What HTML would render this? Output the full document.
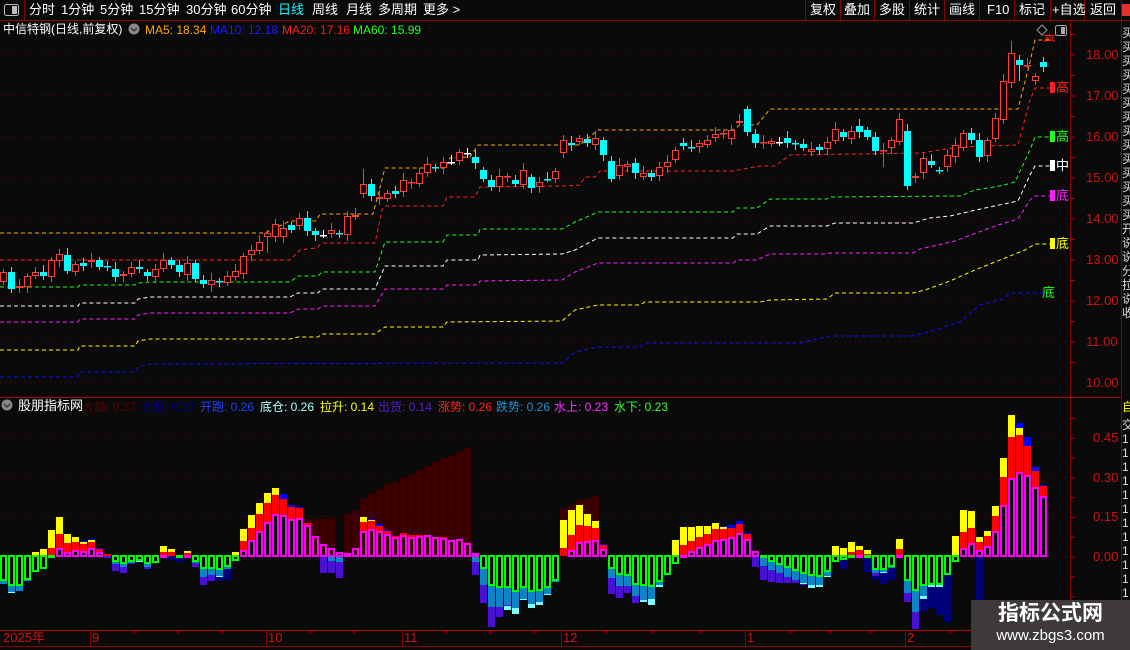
<!DOCTYPE html>
<html><head><meta charset="utf-8">
<style>
html,body{margin:0;padding:0;background:#0a0a0a;}
body{width:1130px;height:650px;overflow:hidden;position:relative;font-family:"Liberation Sans","Noto Sans CJK SC",sans-serif;color:#fff;}
.t{position:absolute;white-space:nowrap;font-size:13px;line-height:15px;}
.m{position:absolute;white-space:nowrap;font-size:12px;line-height:14px;}
.ax{position:absolute;left:1086px;font-size:13px;color:#d01010;font-family:"Liberation Sans",sans-serif;line-height:14px;}
.lb{position:absolute;font-size:13px;line-height:14px;}
.lb i{display:inline-block;width:5px;height:11px;vertical-align:-1px;margin-right:1px;}
.side{position:absolute;left:1122px;font-size:12px;line-height:14px;color:#ddd;overflow:hidden;width:8px;}
</style></head><body>
<svg id="s" width="1130" height="650" style="position:absolute;left:0;top:0" xmlns="http://www.w3.org/2000/svg">
<rect width="1130" height="650" fill="#0a0a0a"/>
<g id="grid" stroke="#6a0000" stroke-dasharray="1 4" stroke-width="1">
<line x1="0" y1="54.5" x2="1068" y2="54.5"/><line x1="0" y1="95.5" x2="1068" y2="95.5"/>
<line x1="0" y1="136.5" x2="1068" y2="136.5"/><line x1="0" y1="177.5" x2="1068" y2="177.5"/>
<line x1="0" y1="218.5" x2="1068" y2="218.5"/><line x1="0" y1="259.5" x2="1068" y2="259.5"/>
<line x1="0" y1="300.5" x2="1068" y2="300.5"/><line x1="0" y1="341.5" x2="1068" y2="341.5"/>
<line x1="0" y1="382.5" x2="1068" y2="382.5"/>
<line x1="0" y1="437.5" x2="1068" y2="437.5"/><line x1="0" y1="477.5" x2="1068" y2="477.5"/>
<line x1="0" y1="516.5" x2="1068" y2="516.5"/><line x1="0" y1="556.5" x2="1068" y2="556.5"/>
</g>
<g id="lines" fill="none" stroke-width="1" stroke-dasharray="4 3"></g>
<g id="g"></g>
<g stroke="#8a0000" stroke-width="1">
<line x1="0" y1="20.5" x2="1130" y2="20.5"/>
<line x1="24.5" y1="0" x2="24.5" y2="20"/>
<line x1="805.5" y1="0" x2="805.5" y2="20"/><line x1="840.5" y1="0" x2="840.5" y2="20"/>
<line x1="874.5" y1="0" x2="874.5" y2="20"/><line x1="909.5" y1="0" x2="909.5" y2="20"/>
<line x1="944.5" y1="0" x2="944.5" y2="20"/><line x1="979.5" y1="0" x2="979.5" y2="20"/>
<line x1="1014.5" y1="0" x2="1014.5" y2="20"/><line x1="1050.5" y1="0" x2="1050.5" y2="20"/>
<line x1="1084.5" y1="0" x2="1084.5" y2="20"/><line x1="1121.5" y1="0" x2="1121.5" y2="650"/>
<line x1="1070.5" y1="20" x2="1070.5" y2="630"/>
<line x1="0" y1="397.5" x2="1121" y2="397.5" stroke="#b00000"/>
<line x1="0" y1="630.5" x2="1121" y2="630.5" stroke="#b00000"/>
<line x1="0" y1="646.5" x2="1121" y2="646.5"/>
<line x1="90.5" y1="630" x2="90.5" y2="646"/><line x1="266.5" y1="630" x2="266.5" y2="646"/>
<line x1="402.5" y1="630" x2="402.5" y2="646"/><line x1="561.5" y1="630" x2="561.5" y2="646"/>
<line x1="745.5" y1="630" x2="745.5" y2="646"/><line x1="905.5" y1="630" x2="905.5" y2="646"/>
</g>
<g id="ticks" stroke="#b00000"></g>
<rect x="4.5" y="4.5" width="14" height="11" rx="2" fill="none" stroke="#bbb"/>
<rect x="12" y="6" width="5" height="8" fill="#bbb"/>
<rect x="1055.5" y="25.5" width="11" height="10" rx="2" fill="none" stroke="#aaa"/>
<rect x="1061" y="27" width="4" height="7" fill="#aaa"/>
<path d="M1042 25 L1047 30 L1042 35 L1037 30 Z" fill="none" stroke="#999"/>
<circle cx="134" cy="29" r="5.5" fill="#888"/><path d="M131 28 L134 31 L137 28" stroke="#333" fill="none" stroke-width="1.3"/>
<circle cx="7" cy="405" r="5.5" fill="#888"/><path d="M4 404 L7 407 L10 404" stroke="#333" fill="none" stroke-width="1.3"/>
<rect x="1122" y="4" width="8" height="12" fill="#e03030"/>
<rect x="971" y="600" width="159" height="50" fill="#3d3a39"/>
</svg>

<div class="t" style="left:29px;top:2px">分时</div>
<div class="t" style="left:61px;top:2px">1分钟</div>
<div class="t" style="left:100px;top:2px">5分钟</div>
<div class="t" style="left:139px;top:2px">15分钟</div>
<div class="t" style="left:186px;top:2px">30分钟</div>
<div class="t" style="left:231px;top:2px">60分钟</div>
<div class="t" style="left:278px;top:2px;color:#00ffff">日线</div>
<div class="t" style="left:312px;top:2px">周线</div>
<div class="t" style="left:346px;top:2px">月线</div>
<div class="t" style="left:378px;top:2px">多周期</div>
<div class="t" style="left:423px;top:2px">更多 &gt;</div>
<div class="t" style="left:810px;top:2px">复权</div>
<div class="t" style="left:844px;top:2px">叠加</div>
<div class="t" style="left:879px;top:2px">多股</div>
<div class="t" style="left:914px;top:2px">统计</div>
<div class="t" style="left:949px;top:2px">画线</div>
<div class="t" style="left:987px;top:2px">F10</div>
<div class="t" style="left:1019px;top:2px">标记</div>
<div class="t" style="left:1052px;top:2px">+自选</div>
<div class="t" style="left:1090px;top:2px">返回</div>

<div class="m" style="left:3px;top:22px;font-size:12px">中信特钢(日线,前复权)</div>
<div class="m" style="left:145px;top:23px;color:#ffa500">MA5: 18.34</div>
<div class="m" style="left:210px;top:23px;color:#1a1aff">MA10: 12.18</div>
<div class="m" style="left:282px;top:23px;color:#ff1a1a">MA20: 17.16</div>
<div class="m" style="left:353px;top:23px;color:#20ff20">MA60: 15.99</div>

<div class="m" style="left:18px;top:399px;font-size:13px">股朋指标网</div>
<div class="m" style="left:82px;top:400px;color:#5a0000">大趋: 0.37</div>
<div class="m" style="left:141px;top:400px;color:#000090">大驱: 0.37</div>
<div class="m" style="left:200px;top:400px;color:#2040ff">开跑: 0.26</div>
<div class="m" style="left:260px;top:400px;color:#b0ffff">底仓: 0.26</div>
<div class="m" style="left:320px;top:400px;color:#ffff00">拉升: 0.14</div>
<div class="m" style="left:378px;top:400px;color:#5020d0">出货: 0.14</div>
<div class="m" style="left:438px;top:400px;color:#ff2020">涨势: 0.26</div>
<div class="m" style="left:496px;top:400px;color:#2090d0">跌势: 0.26</div>
<div class="m" style="left:554px;top:400px;color:#ff30ff">水上: 0.23</div>
<div class="m" style="left:614px;top:400px;color:#30ff30">水下: 0.23</div>

<div class="ax" style="top:48px">18.00</div>
<div class="ax" style="top:89px">17.00</div>
<div class="ax" style="top:130px">16.00</div>
<div class="ax" style="top:171px">15.00</div>
<div class="ax" style="top:212px">14.00</div>
<div class="ax" style="top:253px">13.00</div>
<div class="ax" style="top:294px">12.00</div>
<div class="ax" style="top:335px">11.00</div>
<div class="ax" style="top:376px">10.00</div>
<div class="ax" style="top:431px;left:1093px">0.45</div>
<div class="ax" style="top:471px;left:1093px">0.30</div>
<div class="ax" style="top:510px;left:1093px">0.15</div>
<div class="ax" style="top:550px;left:1093px">0.00</div>

<div class="lb" style="left:1043px;top:34px;color:#ff2020;height:8px;overflow:hidden">高</div>
<div class="lb" style="left:1050px;top:81px;color:#ff2020"><i style="background:#ff2020"></i>高</div>
<div class="lb" style="left:1050px;top:130px;color:#20ff20"><i style="background:#20ff20"></i>高</div>
<div class="lb" style="left:1050px;top:159px;color:#fff"><i style="background:#fff"></i>中</div>
<div class="lb" style="left:1050px;top:189px;color:#ff20ff"><i style="background:#ff20ff"></i>底</div>
<div class="lb" style="left:1050px;top:237px;color:#ffff00"><i style="background:#ffff00"></i>底</div>
<div class="lb" style="left:1042px;top:286px;color:#20ff20">底</div>

<div class="side" style="top:26px">买<br>买<br>买<br>买<br>买<br>买<br>买<br>买<br>买<br>买<br>买<br>买<br>买<br>买<br>开<br>说<br>说<br>分<br>拉<br>说<br>收</div>
<div class="side" style="top:400px;color:#ffff00">自</div>
<div class="side" style="top:418px">交<br>1<br>1<br>1<br>1<br>1<br>1<br>1<br>1<br>1<br>1<br>1<br>1</div>

<div class="m" style="left:3px;top:631px;color:#d01010;font-size:13px">2025年</div>
<div class="m" style="left:92px;top:631px;color:#d01010;font-size:13px">9</div>
<div class="m" style="left:268px;top:631px;color:#d01010;font-size:13px">10</div>
<div class="m" style="left:404px;top:631px;color:#d01010;font-size:13px">11</div>
<div class="m" style="left:563px;top:631px;color:#d01010;font-size:13px">12</div>
<div class="m" style="left:747px;top:631px;color:#d01010;font-size:13px">1</div>
<div class="m" style="left:907px;top:631px;color:#d01010;font-size:13px">2</div>

<div style="position:absolute;left:971px;top:602px;width:159px;text-align:center;font-size:21px;font-weight:bold;color:#fff;line-height:24px;font-family:'Liberation Sans','Noto Sans CJK SC',sans-serif">指标公式网</div>
<div style="position:absolute;left:971px;top:627px;width:159px;text-align:center;font-size:15px;color:#fff;line-height:18px">www.zbgs3.com</div>

<script>
(function(){
var C=["272,282,r","272,289,c","286,288,r","276,287,r","272,276,r","272,276,c","260,277,r","254,261,r","255,271,c","264,272,r",
"263,266,c","260,262,r","260,267,c","266,267,c","269,277,c","274,276,r","267,274,r","267,269,c","272,276,c","269,277,r",
"260,269,r","260,265,c","265,272,c","263,275,r","263,279,c","280,284,c","280,285,r","281,281,c","276,283,r","271,277,r",
"256,274,r","250,255,r","242,251,r","233,237,r","224,237,r","228,237,r","225,230,c","218,226,r","218,231,c","231,235,c",
"235,235,w","230,234,r","233,233,c","216,235,r","215,217,r","184,194,r","184,196,c","197,199,r","193,199,r","191,194,c",
"180,192,r","182,183,r","173,184,r","164,173,r","167,167,c","162,168,r","162,162,w","152,161,r","153,153,w","157,163,c",
"170,179,c","180,187,c","176,187,r","176,176,r","180,184,c","170,185,r","177,188,c","182,187,r","179,179,c","171,179,r",
"140,153,r","143,145,c","138,142,r","139,143,c","138,145,r","140,155,c","161,179,c","165,176,r","164,167,r","163,173,c",
"173,177,r","173,177,c","167,176,r","162,167,r","150,160,r","143,146,c","147,147,c","143,147,r","140,145,r","134,138,r",
"133,134,r","130,139,r","121,123,r","109,132,c","134,143,c","142,143,r","141,144,r","142,142,w","138,143,c","143,144,c",
"144,148,c","149,152,r","147,150,c","142,149,r","129,141,r","132,137,c","131,139,r","126,132,c","130,137,c","137,151,c",
"150,150,r","140,148,r","119,142,r","131,186,c","176,178,r","158,173,r","161,165,c","170,170,c","155,167,r","145,157,r",
"133,148,r","133,140,c","140,157,c","140,156,r","118,139,r","81,120,r","53,83,r","60,65,c","65,65,r","76,81,r","62,67,c"];
var h="";
for(var k=0;k<C.length;k++){
 var p=C[k].split(","),t=+p[0],b=+p[1],ty=p[2],x=8*k,cx=x+3.5;
 var wt=t-3-(k%3)*2,wb=b+3+(k%4);
 if(k==45)wt=169;if(k==112)wt=113;if(k==110)wb=167;if(k==126)wt=41;if(k==127)wb=81;if(k==26)wb=292;if(k==33)wb=253;
 var col=ty=="r"?"#ff3c3c":(ty=="c"?"#00ffff":"#ffffff");
 h+='<line x1="'+cx+'" y1="'+wt+'" x2="'+cx+'" y2="'+wb+'" stroke="'+col+'"/>';
 if(b-t<2){h+='<rect x="'+x+'" y="'+t+'" width="7" height="1.5" fill="'+col+'"/>';}
 else if(ty=="r"){h+='<rect x="'+(x+0.5)+'" y="'+(t+0.5)+'" width="6" height="'+(b-t-1)+'" fill="#0a0a0a" stroke="'+col+'"/>';}
 else{h+='<rect x="'+x+'" y="'+t+'" width="7" height="'+(b-t)+'" fill="'+col+'"/>';}
}
var I=["G25c3","G30c6L1","G30c5","G24c1","G16Y4","G13Y7","G2R8Y18","M8R14Y17","M4R9Y9","M6R8Y5","M5R7Y2B1","M8R6Y2B1","M4R3B1","R2P2","G6c2P7","G8c3P6","G6c1P1","G5L1","G8c3P2","G7",
"M1R3Y6","R4Y3N4","G2N4","M1R2Y2","G6c1P4","G13c8P8","G13c6P6","G14c6L1N4","G11c2N11","G5Y4","M6R9Y12","M16R12Y13","M25R17Y11","M34R19Y10","M42R19Y7","M41R16B5","M37R12B2","M38R10B1","M31R2D37","M20D37",
"M12P17D37","M8c5P12D38","M4c6P16","M3D42","M8D45","M25R9Y5D57","M27R8Y1B1D63","M25R5B2D67","M22R3B1D72","M19R1D74","M21R2D78","M19R2D82","M20R1D86","M21D90","M19D94","M18R1D98","M16D100","M17D104","M13D108","M3c6P13",
"G13c16P18","G30c21P20","G32c19P10","G32c17P1L4","G36c16L6","G32c11L1","G36c12L4","G35c11L3","G32c6L1","G25c1","R8Y28D48","M6R15Y25D51","M14R17Y20D56","M15R15Y12D57","M16R12Y7D60","M7R4B1","G13c9P16","G19c11P12","G20c10P7","G29c11P7",
"G30c14L2","G31c12L6","G26c3L2","G19","G8Y16","M1R10Y18","M5R10Y14","M9R10Y11","M12R10Y8","M16R11Y6","M17R10Y2B1","M19R9B3","M23R9B3","M17R5B1","M5P11","G2c8P14","G6c8P12","G9c8P10","G12c9P6","G15c9P3",
"G18c9L1P1","G20c9L3","G21c8L2","G16c4L1","G6Y10","G4Y8N9","G1R4Y10","M1R5Y4","G1R2Y4N15","G14c3P3N4","G14c2L1N11","G11c1N12","M1R6Y10","G25c12P9","G35c21P17","G30c10L3N12","G29L2N21","G29L2N28","G19N47","G6Y20",
"M8R16Y22","M13R15Y17","M6R8Y5N60","M10R10Y5","M25R15Y10","M51R28Y19","M78R41Y22","M84R37Y7B5","M81R29B9","M69R16B4","M60R10B1"];
var Z=556,col={R:"#ff0000",Y:"#ffff00",B:"#0000ff",c:"#0a84c6",P:"#4a10d6",L:"#80ffff",N:"#000078"};
for(var k=0;k<I.length;k++){
 var x=8*k,re=/([A-Za-z])(\d+)/g,m,d={},ord=[];
 while((m=re.exec(I[k]))){d[m[1]]=+m[2];ord.push(m[1]);}
 if(d.D){h+='<rect x="'+x+'" y="'+(Z-d.D)+'" width="7" height="'+d.D+'" fill="#3a0000"/>';}
 var up=Z,dn=Z;
 if(d.M){up=Z-d.M;}
 ["R","Y","B"].forEach(function(c){if(d[c]){h+='<rect x="'+x+'" y="'+(up-d[c])+'" width="7" height="'+d[c]+'" fill="'+col[c]+'"/>';up-=d[c];}});
 if(d.G){dn=Z+d.G;}
 ord.forEach(function(c){if("cPLN".indexOf(c)>=0){h+='<rect x="'+x+'" y="'+dn+'" width="7" height="'+d[c]+'" fill="'+col[c]+'"/>';dn+=d[c];}});
 if(d.M){h+='<rect x="'+(x+1)+'" y="'+(Z-d.M+1)+'" width="5" height="'+Math.max(d.M-1,1)+'" fill="none" stroke="#ff00ff" stroke-width="2"/>';}
 if(d.G){h+='<rect x="'+(x+1)+'" y="'+Z+'" width="5" height="'+Math.max(d.G-1,1)+'" fill="none" stroke="#00ff00" stroke-width="2"/>';}
}
document.getElementById("g").innerHTML=h;
var L=[
["#ffa500","0,233 265,233 290,221 316,221 320,214 373,214 385,168 445,168 450,158 470,157 478,145 580,145 598,130 733,130 740,125 757,125 770,109 1018,109 1030,62 1035,40 1050,40"],
["#ff2020","0,260 290,260 300,250 316,248 322,243 375,243 382,210 385,206 443,206 447,197 475,197 480,187 563,186 580,185 585,177 595,177 600,171 733,171 760,166 775,166 790,155 920,153 960,147 1018,145 1030,100 1035,88 1050,88"],
["#20ff20","0,287 78,287 80,285 135,285 138,283 150,282 290,282 298,276 318,276 322,272 375,272 385,242 443,242 447,235 478,235 480,229 562,229 575,222 598,212 733,212 737,208 757,208 770,199 827,199 830,197 960,196 975,190 1000,186 1015,182 1030,150 1035,137 1050,137"],
["#ffffff","0,306 78,306 80,303 135,303 138,299 150,297 290,297 298,293 318,293 322,289 375,289 385,266 443,266 447,260 478,260 480,255 562,254 575,250 598,238 733,238 737,234 757,234 770,226 827,226 835,223 913,223 930,218 950,216 985,208 1018,201 1030,175 1035,166 1050,166"],
["#ff20ff","0,322 78,322 80,319 135,319 138,315 150,313 290,313 298,309 318,309 322,306 375,306 385,289 443,289 447,285 478,285 480,281 562,280 575,272 598,263 733,263 737,260 757,260 770,254 827,254 830,253 913,253 920,249 955,241 995,226 1018,219 1030,200 1035,196 1050,196"],
["#ffff00","0,350 78,350 80,346 135,346 138,341 150,339 290,339 298,337 318,337 322,334 375,334 385,327 443,327 447,322 562,321 575,310 598,305 640,305 645,302 760,302 770,300 827,299 835,293 913,293 925,290 950,281 975,270 1005,258 1025,250 1035,244 1050,244"],
["#1010ff","0,377 78,377 80,372 135,372 138,367 150,364 480,363 562,363 575,352 598,347 640,347 645,343 800,343 830,336 913,336 935,330 960,322 980,305 1000,300 1012,293 1050,293"]];
var s="";L.forEach(function(l){s+='<polyline points="'+l[1]+'" stroke="'+l[0]+'"/>';});
document.getElementById("lines").innerHTML=s;
var t="";for(var y=34;y<=382;y+=20.5){t+='<line x1="1070" y1="'+(y+0.5)+'" x2="1075" y2="'+(y+0.5)+'"/>';}
for(var y=418;y<=600;y+=19.8){t+='<line x1="1070" y1="'+(y+0.5)+'" x2="1075" y2="'+(y+0.5)+'"/>';}
[134,178,222,310,354,446,490,534,606,652,700,790,830,870,950,1000,1040].forEach(function(x){t+='<line x1="'+(x+0.5)+'" y1="630" x2="'+(x+0.5)+'" y2="634"/>';});
document.getElementById("ticks").innerHTML=t;
})();
</script>
</body></html>
